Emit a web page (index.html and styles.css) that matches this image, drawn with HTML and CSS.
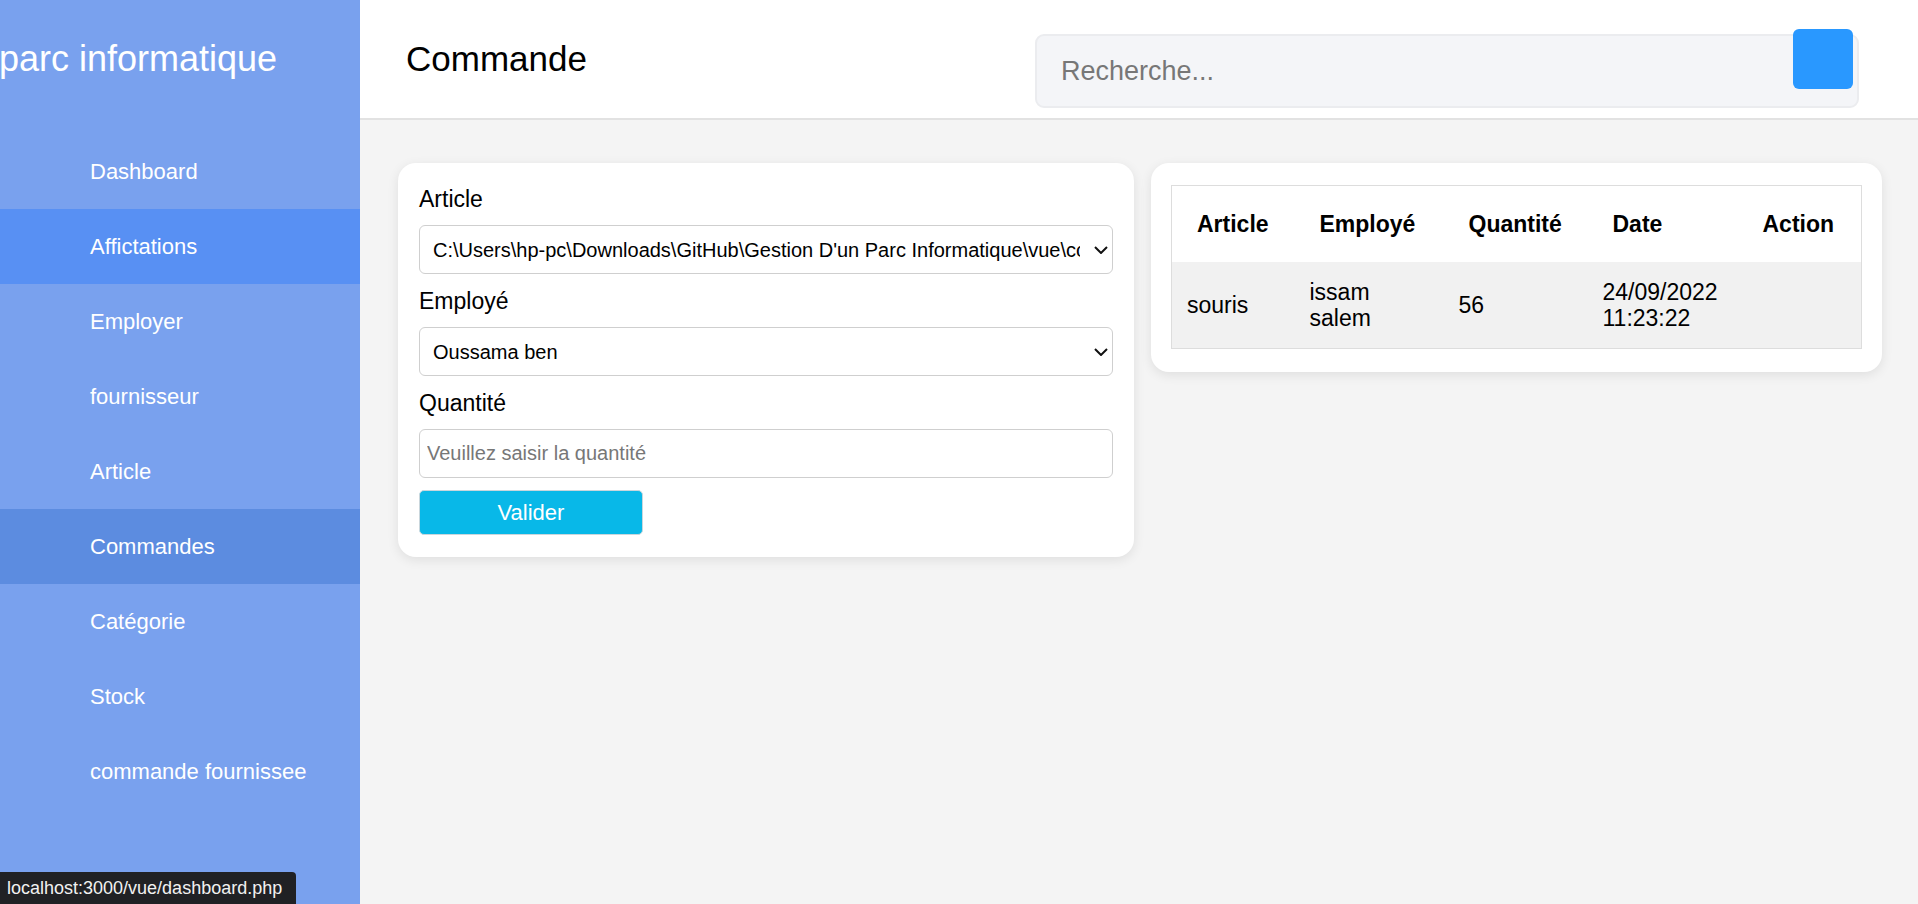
FILE: index.html
```html
<!DOCTYPE html>
<html lang="fr">
<head>
<meta charset="utf-8">
<title>Commande</title>
<link rel="stylesheet" href="styles.css">
</head>
<body>
<div class="layout">
  <aside class="sidebar">
    <div class="brand">parc informatique</div>
    <nav class="nav">
      <a class="nav-item" href="#">Dashboard</a>
      <a class="nav-item active" href="#">Affictations</a>
      <a class="nav-item" href="#">Employer</a>
      <a class="nav-item" href="#">fournisseur</a>
      <a class="nav-item" href="#">Article</a>
      <a class="nav-item hover" href="#">Commandes</a>
      <a class="nav-item" href="#">Catégorie</a>
      <a class="nav-item" href="#">Stock</a>
      <a class="nav-item" href="#">commande fournissee</a>
    </nav>
  </aside>
  <div class="main">
    <header class="topbar">
      <h1 class="page-title">Commande</h1>
      <div class="search">
        <input class="search-input" type="text" placeholder="Recherche...">
        <button class="search-btn" type="button"></button>
      </div>
    </header>
    <section class="content">
      <form class="card form-card">
        <label class="field-label">Article</label>
        <div class="select-wrap">
          <select class="field-select">
            <option>C:\Users\hp-pc\Downloads\GitHub\Gestion D'un Parc Informatique\vue\commande.php</option>
          </select>
          <svg class="chevron" width="14" height="8" viewBox="0 0 14 8"><path d="M1 1l6 6 6-6" fill="none" stroke="#111" stroke-width="2"/></svg>
        </div>
        <label class="field-label">Employé</label>
        <div class="select-wrap">
          <select class="field-select">
            <option>Oussama ben</option>
          </select>
          <svg class="chevron" width="14" height="8" viewBox="0 0 14 8"><path d="M1 1l6 6 6-6" fill="none" stroke="#111" stroke-width="2"/></svg>
        </div>
        <label class="field-label">Quantité</label>
        <input class="field-input" type="text" placeholder="Veuillez saisir la quantité">
        <button class="submit-btn" type="button">Valider</button>
      </form>
      <div class="card table-card">
        <table class="data-table">
          <colgroup>
            <col class="c1"><col class="c2"><col class="c3"><col class="c4"><col>
          </colgroup>
          <thead>
            <tr><th>Article</th><th>Employé</th><th>Quantité</th><th>Date</th><th>Action</th></tr>
          </thead>
          <tbody>
            <tr><td>souris</td><td>issam salem</td><td>56</td><td>24/09/2022 11:23:22</td><td></td></tr>
          </tbody>
        </table>
      </div>
    </section>
  </div>
</div>
<div class="status-bubble">localhost:3000/vue/dashboard.php</div>
</body>
</html>
```
FILE: styles.css
```css
* { box-sizing: border-box; }
html, body { margin: 0; padding: 0; }
body {
  font-family: "Liberation Sans", Arial, sans-serif;
  background: #f4f4f4;
  color: #000;
  overflow: hidden;
}
.layout { display: flex; min-height: 100vh; }
.sidebar {
  width: 360px;
  flex: 0 0 360px;
  background: #79a1ee;
  color: #fff;
  padding-top: 38px;
  min-height: 904px;
}
.brand {
  font-size: 36px;
  line-height: 41px;
  margin-bottom: 55px;
  white-space: nowrap;
  text-indent: -1px;
}
.nav { display: flex; flex-direction: column; }
.nav-item {
  height: 75px;
  display: flex;
  align-items: center;
  padding-left: 90px;
  font-size: 22px;
  color: #fff;
  text-decoration: none;
}
.nav-item.active { background: #5890f3; }
.nav-item.hover { background: #5c8ce0; }

.main { flex: 1; display: flex; flex-direction: column; }
.topbar {
  height: 120px;
  background: #fff;
  border-bottom: 2px solid #e2e2e2;
  display: flex;
  align-items: flex-start;
  padding-left: 46px;
  padding-right: 59px;
}
.page-title {
  margin: 39px 0 0;
  font-size: 35px;
  font-weight: normal;
  line-height: 40px;
}
.search {
  position: relative;
  margin-left: auto;
  margin-top: 34px;
  width: 824px;
  height: 74px;
  background: #f4f5f8;
  border: 2px solid #ebecef;
  border-radius: 9px;
}
.search-input {
  width: 100%;
  height: 100%;
  border: none;
  background: transparent;
  outline: none;
  padding: 0 24px;
  font-family: "Liberation Sans", Arial, sans-serif;
  font-size: 27px;
  color: #333;
}
.search-input::placeholder { color: #777; }
.search-btn {
  position: absolute;
  top: -7px;
  right: 4px;
  width: 60px;
  height: 60px;
  border: none;
  border-radius: 6px;
  background: #2998ff;
}

.content {
  display: grid;
  grid-template-columns: 736px 731px;
  column-gap: 17px;
  align-items: start;
  padding: 43px 0 0 38px;
}
.card {
  background: #fff;
  border-radius: 18px;
  box-shadow: 0 3px 12px rgba(0, 0, 0, 0.09);
}
.form-card {
  padding: 23px 21px 22px 21px;
  margin: 0;
}
.field-label {
  display: block;
  font-size: 23px;
  line-height: 26px;
}
.select-wrap {
  position: relative;
  margin: 13px 0 14px;
}
.field-select {
  display: block;
  width: 100%;
  height: 49px;
  -webkit-appearance: none;
  appearance: none;
  background: #fff;
  border: 1px solid #cfcfcf;
  border-radius: 6px;
  padding: 0 32px 0 13px;
  font-family: "Liberation Sans", Arial, sans-serif;
  font-size: 20px;
  color: #000;
}
.chevron {
  position: absolute;
  right: 5px;
  top: 21px;
}
.field-input {
  display: block;
  width: 100%;
  height: 49px;
  margin-top: 13px;
  border: 1px solid #cfcfcf;
  border-radius: 6px;
  padding: 0 7px;
  font-family: "Liberation Sans", Arial, sans-serif;
  font-size: 20px;
}
.field-input::placeholder { color: #777; }
.submit-btn {
  display: block;
  margin-top: 12px;
  width: 224px;
  height: 45px;
  background: #08b8e8;
  color: #fff;
  border: 1px solid #c9d6dc;
  border-radius: 5px;
  font-family: "Liberation Sans", Arial, sans-serif;
  font-size: 22px;
}

.table-card { padding: 22px 20px 23px; }
.data-table {
  width: 100%;
  border-collapse: collapse;
  table-layout: fixed;
  border: 1px solid #dddddd;
  font-size: 23px;
  line-height: 26px;
}
.data-table col.c1 { width: 123px; }
.data-table col.c2 { width: 149px; }
.data-table col.c3 { width: 144px; }
.data-table col.c4 { width: 150px; }
.data-table th {
  text-align: left;
  font-weight: bold;
  padding: 25px 10px 25px 25px;
  background: #fff;
  white-space: nowrap;
}
.data-table td {
  padding: 17px 15px;
  background: #f1f1f1;
  vertical-align: middle;
}

.status-bubble {
  position: fixed;
  left: 0;
  bottom: 0;
  width: 296px;
  height: 32px;
  padding-left: 7px;
  display: flex;
  align-items: center;
  background: #202124;
  color: #f1f1f1;
  font-family: "Liberation Sans", Arial, sans-serif;
  font-size: 18px;
  border-top-right-radius: 4px;
}
```
